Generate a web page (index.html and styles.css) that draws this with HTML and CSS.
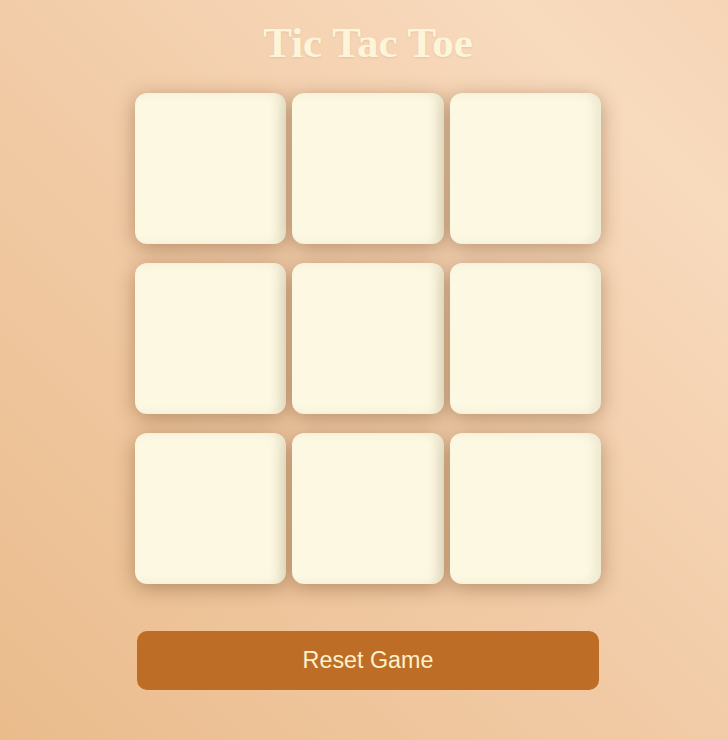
FILE: index.html
```html
<!DOCTYPE html>
<html lang="en">
<head>
<meta charset="utf-8">
<title>Tic Tac Toe</title>
<link rel="stylesheet" href="styles.css">
</head>
<body>
<main class="game">
  <h1 class="title">Tic Tac Toe</h1>
  <div class="board">
    <div class="cell"></div>
    <div class="cell"></div>
    <div class="cell"></div>
    <div class="cell"></div>
    <div class="cell"></div>
    <div class="cell"></div>
    <div class="cell"></div>
    <div class="cell"></div>
    <div class="cell"></div>
  </div>
  <button class="reset">Reset Game</button>
</main>
</body>
</html>
```
FILE: styles.css
```css
html, body {
  margin: 0;
  height: 100%;
}
body {
  background: linear-gradient(45deg, #eabc8c 0%, #f2cca8 50%, #f8dabd 85%, #f6d5b6 100%);
  padding-left: 8px;
  box-sizing: border-box;
  overflow: hidden;
}
.game {
  display: flex;
  flex-direction: column;
  align-items: center;
}
.title {
  margin: 18px 0 0;
  font-family: "Liberation Serif", "Times New Roman", serif;
  font-weight: bold;
  font-size: 43px;
  line-height: 50px;
  color: #fdf5da;
  text-shadow: 0 1px 2px rgba(160, 100, 50, 0.15);
}
.board {
  margin-top: 25px;
  width: 466px;
  display: grid;
  grid-template-columns: repeat(3, 1fr);
  grid-auto-rows: 151px;
  column-gap: 6px;
  row-gap: 19px;
}
.cell {
  background: #fdf8e2;
  border-radius: 12px;
  box-shadow: 0 4px 20px rgba(100, 60, 25, 0.42), inset -7px 0 10px rgba(110, 110, 70, 0.1);
}
.reset {
  margin-top: 47px;
  width: 462px;
  height: 59px;
  border: none;
  border-radius: 10px;
  background: #bd6d26;
  color: #fdf1cc;
  font-family: "Liberation Sans", Arial, sans-serif;
  font-size: 23.3px;
  cursor: pointer;
}
```
